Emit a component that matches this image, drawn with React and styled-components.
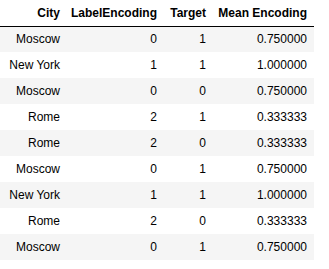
import React from 'react'
import styled, { createGlobalStyle } from 'styled-components'

const GlobalStyle = createGlobalStyle`
  body {
    margin: 0;
    background: #fff;
    font-family: "Liberation Sans", Arial, sans-serif;
  }
`

const Table = styled.table`
  border-collapse: collapse;
  border-spacing: 0;
  table-layout: fixed;
  width: 314px;
  font-size: 12px;
  color: #000;
`

const HeadCell = styled.th`
  width: ${props => props.w}px;
  height: 26px;
  padding: 0 7px 0 0;
  text-align: right;
  font-weight: bold;
  border-bottom: 1px solid #000;
  box-sizing: border-box;
`

const Row = styled.tr`
  background: ${props => (props.shaded ? '#f5f5f5' : '#fff')};
`

const Cell = styled.td`
  height: 26px;
  padding: 0 7px 0 0;
  text-align: right;
  vertical-align: middle;
  box-sizing: border-box;
`

const columns = [
  { title: 'City', w: 67 },
  { title: 'LabelEncoding', w: 97 },
  { title: 'Target', w: 49 },
  { title: 'Mean Encoding', w: 101 },
]

const rows = [
  ['Moscow', 0, 1, '0.750000'],
  ['New York', 1, 1, '1.000000'],
  ['Moscow', 0, 0, '0.750000'],
  ['Rome', 2, 1, '0.333333'],
  ['Rome', 2, 0, '0.333333'],
  ['Moscow', 0, 1, '0.750000'],
  ['New York', 1, 1, '1.000000'],
  ['Rome', 2, 0, '0.333333'],
  ['Moscow', 0, 1, '0.750000'],
]

export default function App() {
  return (
    <>
      <GlobalStyle />
      <Table>
        <thead>
          <tr>
            {columns.map(c => (
              <HeadCell key={c.title} w={c.w}>{c.title}</HeadCell>
            ))}
          </tr>
        </thead>
        <tbody>
          {rows.map((r, i) => (
            <Row key={i} shaded={i % 2 === 0}>
              {r.map((v, j) => (
                <Cell key={j}>{v}</Cell>
              ))}
            </Row>
          ))}
        </tbody>
      </Table>
    </>
  )
}
